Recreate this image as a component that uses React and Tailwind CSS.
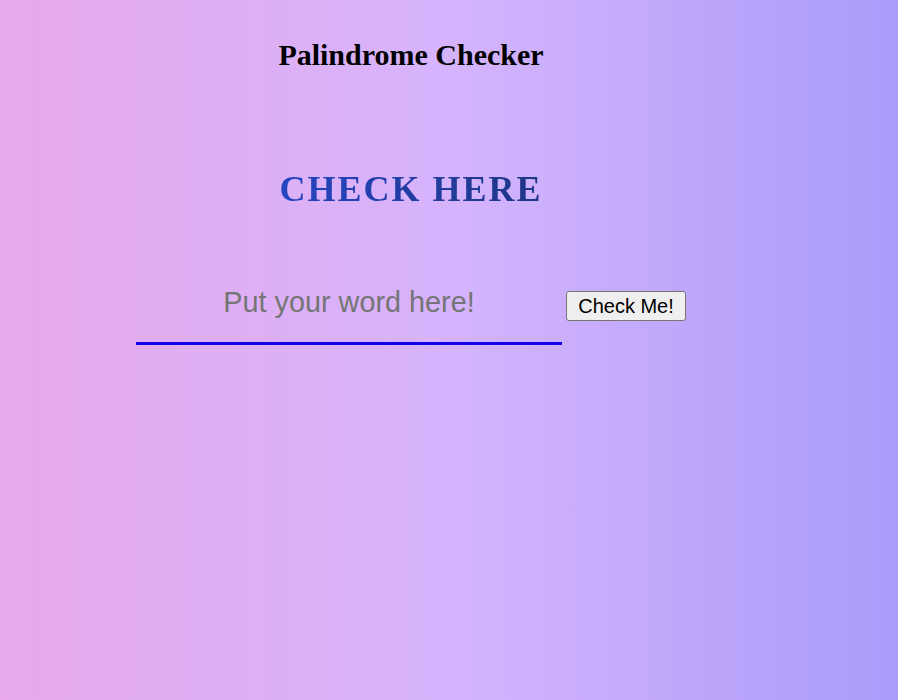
export default function App() {
  return (
    <div className="min-h-screen w-full bg-[linear-gradient(to_right,#e7a9ea_0%,#d6b4fd_50%,#a99cf9_100%)]">
      <div className="w-[822px] flex flex-col items-center">
        <h1 className="mt-[38px] text-[30px] leading-[34px] font-bold text-black font-['Liberation_Serif',serif]">
          Palindrome Checker
        </h1>
        <h2 className="mt-[97px] text-[36px] leading-[41px] font-bold tracking-[2px] font-['Liberation_Serif',serif] bg-[linear-gradient(to_right,#2545c2,#1f3684)] bg-clip-text text-transparent">
          CHECK HERE
        </h2>
        <div className="mt-[76px] flex items-start gap-[4px]">
          <input
            type="text"
            placeholder="Put your word here!"
            className="w-[426px] h-[59px] pb-[23px] bg-transparent border-0 border-b-[3px] border-[#1400e6] text-center text-[28.8px] font-['Liberation_Sans',Arial,sans-serif] text-black placeholder:text-[#757575] outline-none"
          />
          <button className="mt-[5px] w-[120px] h-[30px] px-[10px] bg-[#efefef] border border-[#767676] rounded-[3px] text-[20px] leading-[23px] text-black font-['Liberation_Sans',Arial,sans-serif]">
            Check Me!
          </button>
        </div>
      </div>
    </div>
  );
}
